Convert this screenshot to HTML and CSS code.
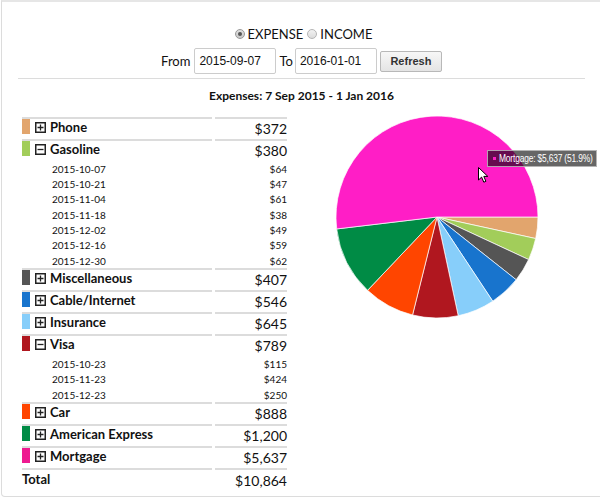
FILE: index.html
```html
<!DOCTYPE html>
<html>
<head>
<meta charset="utf-8">
<link rel="stylesheet" href="styles.css">
</head>
<body>
<div class="panel">
  <div class="radios">
    <label class="radio"><span class="dot on"></span>EXPENSE</label>
    <label class="radio"><span class="dot"></span>INCOME</label>
  </div>
  <div class="range">
    <span class="lbl">From</span>
    <input class="date" type="text" value="2015-09-07">
    <span class="lbl to">To</span>
    <input class="date" type="text" value="2016-01-01">
    <button class="btn">Refresh</button>
  </div>
  <hr class="rule">
  <h1 class="title">Expenses: 7 Sep 2015 - 1 Jan 2016</h1>
  <div class="main">
    <table class="cats">
      <tr class="cat"><td class="name"><div class="nm"><span class="sw c1"></span><svg class="tog" width="11" height="11" viewBox="0 0 11 11"><rect x="0.75" y="0.75" width="9.5" height="9.5" fill="none" stroke="#222" stroke-width="1.5"/><path d="M2.5 5.5H8.5M5.5 2.5V8.5" stroke="#222" stroke-width="1.3"/></svg><span>Phone</span></div></td><td class="amt">$372</td></tr>
      <tr class="cat"><td class="name"><div class="nm"><span class="sw c2"></span><svg class="tog" width="11" height="11" viewBox="0 0 11 11"><rect x="0.75" y="0.75" width="9.5" height="9.5" fill="none" stroke="#222" stroke-width="1.5"/><path d="M2.5 5.5H8.5" stroke="#222" stroke-width="1.3"/></svg><span>Gasoline</span></div></td><td class="amt">$380</td></tr>
      <tr class="sub"><td class="d">2015-10-07</td><td class="v">$64</td></tr>
      <tr class="sub"><td class="d">2015-10-21</td><td class="v">$47</td></tr>
      <tr class="sub"><td class="d">2015-11-04</td><td class="v">$61</td></tr>
      <tr class="sub"><td class="d">2015-11-18</td><td class="v">$38</td></tr>
      <tr class="sub"><td class="d">2015-12-02</td><td class="v">$49</td></tr>
      <tr class="sub"><td class="d">2015-12-16</td><td class="v">$59</td></tr>
      <tr class="sub"><td class="d">2015-12-30</td><td class="v">$62</td></tr>
      <tr class="cat"><td class="name"><div class="nm"><span class="sw c3"></span><svg class="tog" width="11" height="11" viewBox="0 0 11 11"><rect x="0.75" y="0.75" width="9.5" height="9.5" fill="none" stroke="#222" stroke-width="1.5"/><path d="M2.5 5.5H8.5M5.5 2.5V8.5" stroke="#222" stroke-width="1.3"/></svg><span>Miscellaneous</span></div></td><td class="amt">$407</td></tr>
      <tr class="cat"><td class="name"><div class="nm"><span class="sw c4"></span><svg class="tog" width="11" height="11" viewBox="0 0 11 11"><rect x="0.75" y="0.75" width="9.5" height="9.5" fill="none" stroke="#222" stroke-width="1.5"/><path d="M2.5 5.5H8.5M5.5 2.5V8.5" stroke="#222" stroke-width="1.3"/></svg><span>Cable/Internet</span></div></td><td class="amt">$546</td></tr>
      <tr class="cat"><td class="name"><div class="nm"><span class="sw c5"></span><svg class="tog" width="11" height="11" viewBox="0 0 11 11"><rect x="0.75" y="0.75" width="9.5" height="9.5" fill="none" stroke="#222" stroke-width="1.5"/><path d="M2.5 5.5H8.5M5.5 2.5V8.5" stroke="#222" stroke-width="1.3"/></svg><span>Insurance</span></div></td><td class="amt">$645</td></tr>
      <tr class="cat"><td class="name"><div class="nm"><span class="sw c6"></span><svg class="tog" width="11" height="11" viewBox="0 0 11 11"><rect x="0.75" y="0.75" width="9.5" height="9.5" fill="none" stroke="#222" stroke-width="1.5"/><path d="M2.5 5.5H8.5" stroke="#222" stroke-width="1.3"/></svg><span>Visa</span></div></td><td class="amt">$789</td></tr>
      <tr class="sub"><td class="d">2015-10-23</td><td class="v">$115</td></tr>
      <tr class="sub"><td class="d">2015-11-23</td><td class="v">$424</td></tr>
      <tr class="sub"><td class="d">2015-12-23</td><td class="v">$250</td></tr>
      <tr class="cat"><td class="name"><div class="nm"><span class="sw c7"></span><svg class="tog" width="11" height="11" viewBox="0 0 11 11"><rect x="0.75" y="0.75" width="9.5" height="9.5" fill="none" stroke="#222" stroke-width="1.5"/><path d="M2.5 5.5H8.5M5.5 2.5V8.5" stroke="#222" stroke-width="1.3"/></svg><span>Car</span></div></td><td class="amt">$888</td></tr>
      <tr class="cat"><td class="name"><div class="nm"><span class="sw c8"></span><svg class="tog" width="11" height="11" viewBox="0 0 11 11"><rect x="0.75" y="0.75" width="9.5" height="9.5" fill="none" stroke="#222" stroke-width="1.5"/><path d="M2.5 5.5H8.5M5.5 2.5V8.5" stroke="#222" stroke-width="1.3"/></svg><span>American Express</span></div></td><td class="amt">$1,200</td></tr>
      <tr class="cat"><td class="name"><div class="nm"><span class="sw c9"></span><svg class="tog" width="11" height="11" viewBox="0 0 11 11"><rect x="0.75" y="0.75" width="9.5" height="9.5" fill="none" stroke="#222" stroke-width="1.5"/><path d="M2.5 5.5H8.5M5.5 2.5V8.5" stroke="#222" stroke-width="1.3"/></svg><span>Mortgage</span></div></td><td class="amt">$5,637</td></tr>
      <tr class="total"><td class="tl">Total</td><td class="ta">$10,864</td></tr>
    </table>
    <div class="chart">
      <svg class="pie" width="204" height="204" viewBox="-102 -102 204 204">
        <g stroke="#fff" stroke-width="0.7" stroke-linejoin="round">
          <path fill="#e2a56d" d="M0 0L101 0A101 101 0 0 1 98.67 21.56Z"/>
          <path fill="#a2cd5a" d="M0 0L98.67 21.56A101 101 0 0 1 91.60 42.56Z"/>
          <path fill="#555555" d="M0 0L91.60 42.56A101 101 0 0 1 79.15 62.74Z"/>
          <path fill="#1874cd" d="M0 0L79.15 62.74A101 101 0 0 1 55.75 84.22Z"/>
          <path fill="#87cefa" d="M0 0L55.75 84.22A101 101 0 0 1 21.22 98.75Z"/>
          <path fill="#b0171f" d="M0 0L21.22 98.75A101 101 0 0 1 -24.46 97.99Z"/>
          <path fill="#ff4500" d="M0 0L-24.46 97.99A101 101 0 0 1 -69.45 73.33Z"/>
          <path fill="#008b45" d="M0 0L-69.45 73.33A101 101 0 0 1 -100.29 11.95Z"/>
          <path fill="#ff1ec6" d="M0 0L-100.29 11.95A101 101 0 1 1 101 0Z"/>
        </g>
      </svg>
      <div class="tip"><span class="tipdot"></span><span class="tiptext">Mortgage: $5,637 (51.9%)</span></div>
      <svg class="cursor" width="11" height="17" viewBox="0 0 11 17"><path d="M0.5 0.5L0.5 13L3.6 10.1L5.8 15.2L7.9 14.3L5.8 9.4L9.8 9.4Z" fill="#fff" stroke="#000" stroke-width="1" stroke-linejoin="round"/></svg>
    </div>
  </div>
</div>
</body>
</html>
```

FILE: styles.css
```css
html, body {
  margin: 0;
  padding: 0;
  background: #fff;
  overflow: hidden;
}
body {
  font-family: Lato, "Open Sans", sans-serif;
  color: #111;
}
.panel {
  box-sizing: border-box;
  margin-left: 1px;
  width: 602px;
  height: 497px;
  border-left: 1px solid #dcdcdc;
  border-top: 2px solid #e6e6e6;
  border-bottom: 1px solid #dcdcdc;
  border-right: 1px solid #dcdcdc;
  border-radius: 0 0 4px 4px;
  padding: 0 17px 0 16px;
}
.radios {
  margin-top: 23px;
  height: 18px;
  display: flex;
  justify-content: center;
  align-items: center;
  font-size: 13px;
  color: #111;
  padding-left: 4px;
}
.radio {
  display: flex;
  align-items: center;
  margin: 0 2px;
}
.dot {
  box-sizing: border-box;
  width: 10px;
  height: 10px;
  border-radius: 50%;
  border: 1px solid #b5b5b5;
  background: linear-gradient(#f2f2f2, #dcdcdc);
  margin-right: 3px;
  position: relative;
}
.dot.on {
  border-color: #999;
  background: linear-gradient(#e0e0e0, #c8c8c8);
}
.dot.on::after {
  content: "";
  position: absolute;
  left: 2px;
  top: 2px;
  width: 4px;
  height: 4px;
  border-radius: 50%;
  background: #555;
}
.range {
  margin-top: 5px;
  height: 26px;
  display: flex;
  justify-content: center;
  align-items: center;
  font-size: 13px;
}
.lbl { margin-right: 4px; }
.lbl.to { margin-left: 3px; margin-right: 2px; }
.date {
  box-sizing: border-box;
  width: 82px;
  height: 26px;
  border: 1px solid #ccc;
  border-radius: 2px;
  padding: 0 4px;
  font-family: "Liberation Sans", Arial, sans-serif;
  font-size: 12px;
  color: #111;
  background: #fff;
  margin: 0;
}
.btn {
  box-sizing: border-box;
  margin-left: 3px;
  width: 62px;
  height: 21px;
  border: 1px solid #b8b8b8;
  border-radius: 2px;
  background: linear-gradient(#f7f7f7, #e4e4e4);
  font-family: "Liberation Sans", Arial, sans-serif;
  font-weight: bold;
  font-size: 11px;
  color: #333;
  padding: 0;
}
.rule {
  margin: 4px 0 0 0;
  border: 0;
  border-top: 1px solid #dcdcdc;
  height: 0;
}
.title {
  margin: 9px 0 0 0;
  font-size: 12px;
  line-height: 16px;
  font-weight: bold;
  text-align: center;
  color: #111;
}
.main {
  margin-top: 13px;
  display: flex;
  align-items: flex-start;
}
.cats {
  border-collapse: separate;
  border-spacing: 3px 0;
  margin-left: 1px;
  width: 271px;
  table-layout: fixed;
}
.cats td { padding: 0; }
.cat td {
  box-sizing: border-box;
  height: 22px;
  border-top: 2px solid #dcdcdc;
  vertical-align: top;
}
.name { width: 190px; }
.nm {
  display: flex;
  align-items: center;
  height: 16px;
  font-size: 13px;
  font-weight: bold;
  line-height: 16px;
}
.sw {
  align-self: flex-start;
  width: 8px;
  height: 15px;
  margin-right: 5px;
  flex: none;
}
.tog { flex: none; margin-right: 4px; }
.c1 { background: #e2a56d; }
.c2 { background: #a2cd5a; }
.c3 { background: #555555; }
.c4 { background: #1874cd; }
.c5 { background: #87cefa; }
.c6 { background: #b0171f; }
.c7 { background: #ff4500; }
.c8 { background: #008b45; }
.c9 { background: #ee1a90; }
.amt {
  text-align: right;
  font-size: 14px;
  line-height: 16px;
  padding-top: 2px !important;
}
.sub td {
  height: 15.33px;
  font-size: 10px;
  line-height: 12px;
  vertical-align: middle;
  color: #111;
}
.sub .d { padding-left: 30px; }
.sub .v { text-align: right; }
.total td {
  border-top: 2px solid #dcdcdc;
  vertical-align: top;
  height: 26px;
}
.tl {
  font-size: 13px;
  font-weight: bold;
  line-height: 16px;
  padding-top: 1px !important;
}
.ta {
  text-align: right;
  font-size: 14px;
  line-height: 16px;
  padding-top: 3px !important;
}
.chart {
  position: relative;
  margin-left: 45px;
  margin-top: -2px;
  width: 204px;
  height: 204px;
}
.pie { display: block; }
.tip {
  position: absolute;
  left: 152px;
  top: 35px;
  box-sizing: border-box;
  width: 110px;
  height: 17px;
  background: rgba(0, 0, 0, 0.6);
  border: 1px solid rgba(200, 200, 200, 0.8);
  color: #fff;
  font-family: "Liberation Sans", Arial, sans-serif;
  font-size: 10px;
  line-height: 15px;
  white-space: nowrap;
  padding-left: 11px;
  overflow: hidden;
}
.tiptext {
  display: inline-block;
  letter-spacing: -0.2px;
  transform: scaleX(0.84);
  transform-origin: left center;
}
.tipdot {
  position: absolute;
  left: 5px;
  top: 6px;
  width: 3px;
  height: 3px;
  background: #ff1ec6;
}
.cursor {
  position: absolute;
  left: 143px;
  top: 52px;
}
```
